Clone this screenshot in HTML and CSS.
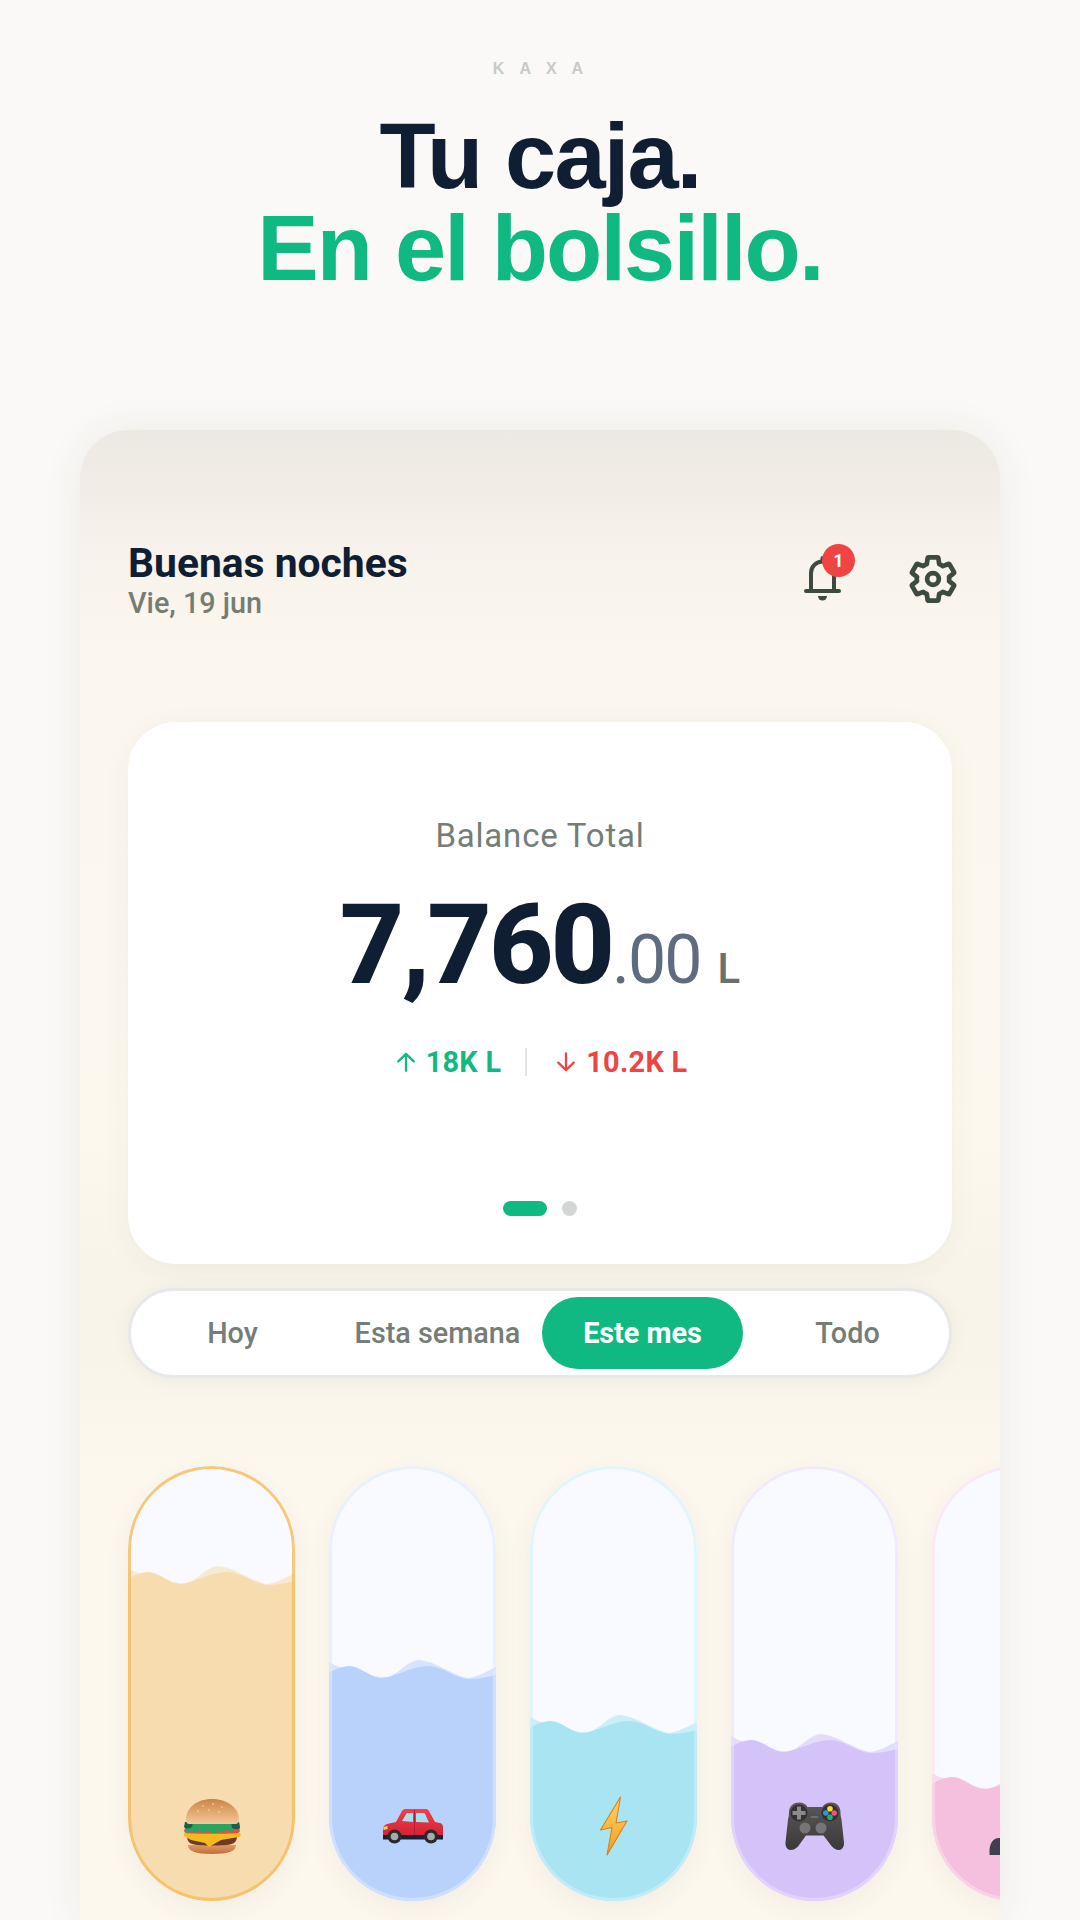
FILE: index.html
```html
<!DOCTYPE html>
<html lang="es">
<head>
<meta charset="utf-8">
<title>Kaxa</title>
<link rel="stylesheet" href="styles.css">
</head>
<body>
<svg class="defs" width="0" height="0" aria-hidden="true">
  <defs>
    <linearGradient id="bun" x1="0" y1="0" x2="0" y2="1"><stop offset="0" stop-color="#cb8549"/><stop offset="1" stop-color="#f6c898"/></linearGradient>
    <linearGradient id="bunlow" x1="0" y1="0" x2="0" y2="1"><stop offset="0" stop-color="#e09a62"/><stop offset="1" stop-color="#bf6f3a"/></linearGradient>
    <linearGradient id="boltfill" x1="0" y1="0" x2="0" y2="1"><stop offset="0" stop-color="#ffd76a"/><stop offset="1" stop-color="#f59b1e"/></linearGradient>
    <linearGradient id="padbody" x1="0" y1="0" x2="0" y2="1"><stop offset="0" stop-color="#5b585a"/><stop offset="1" stop-color="#3a3839"/></linearGradient>
    <linearGradient id="carbody" x1="0" y1="0" x2="0" y2="1"><stop offset="0" stop-color="#f0404e"/><stop offset="1" stop-color="#d4202f"/></linearGradient>
    <symbol id="wave" viewBox="0 0 163 22" preserveAspectRatio="none">
      <path class="wave-back" d="M0 2C4 4 7 6 10 7 26 10 42 17 55 18 66 16 76 1 87 0 102 0 120 15 135 18 145 17 155 11 163 7V22H0Z"/>
      <path class="wave-front" d="M0 13C6 9 14 6 20 6 30 6 40 17 50 18 66 17 80 6 97 6 110 6 125 19 137 19 146 19 155 17 163 15V22H0Z"/>
    </symbol>
  </defs>
</svg>
<header class="hero">
  <div class="brand">KAXA</div>
  <h1 class="headline"><span class="line-dark">Tu caja.</span><span class="line-green">En el bolsillo.</span></h1>
</header>
<main class="phone">
  <section class="topbar">
    <div class="greeting">
      <div class="hello">Buenas noches</div>
      <div class="date">Vie, 19 jun</div>
    </div>
    <div class="actions">
      <div class="bell">
        <svg class="bell-icon" viewBox="0 0 50 50" fill="none" stroke="#3d4a3f" stroke-width="4" stroke-linejoin="round" stroke-linecap="round"><path d="M8 37h33M13 37V19a11.500 11.500 0 0 1 23 0v18"/><path d="M24.500 7.500V4"/><path d="M20 42h9a4.500 4.500 0 0 1-9 0z" fill="#3d4a3f" stroke="none"/></svg>
        <span class="badge">1</span>
      </div>
      <svg class="gear-icon" viewBox="0 0 24 24" fill="none" stroke="#3d4a3f" stroke-width="2.100" stroke-linejoin="round"><path d="M19.140 12.940c.04-.3.06-.61.06-.94 0-.32-.02-.64-.07-.94l2.030-1.580c.18-.14.23-.41.12-.61l-1.920-3.320c-.12-.22-.37-.29-.59-.22l-2.390.96c-.5-.38-1.030-.7-1.620-.94l-.36-2.540c-.04-.24-.24-.41-.48-.41h-3.840c-.24 0-.43.17-.47.41l-.36 2.540c-.59.24-1.130.57-1.620.94l-2.390-.96c-.22-.08-.47 0-.59.22L2.740 8.870c-.12.21-.08.47.12.61l2.030 1.580c-.05.3-.09.63-.09.94s.02.64.07.94l-2.030 1.580c-.18.14-.23.41-.12.61l1.920 3.320c.12.22.37.29.59.22l2.390-.96c.5.38 1.030.7 1.620.94l.36 2.540c.05.24.24.41.48.41h3.840c.24 0 .44-.17.47-.41l.36-2.540c.59-.24 1.130-.56 1.620-.94l2.390.96c.22.08.47 0 .59-.22l1.920-3.320c.12-.22.07-.47-.12-.61l-2.010-1.580z"/><circle cx="12" cy="12" r="2.600"/></svg>
    </div>
  </section>

  <section class="balance">
    <div class="balance-label">Balance Total</div>
    <div class="amount"><span class="amount-int">7,760</span><span class="amount-dec">.00</span><span class="amount-cur">L</span></div>
    <div class="flows">
      <span class="flow flow-in"><svg class="arrow" viewBox="0 0 24 24" fill="none" stroke="currentColor" stroke-width="1.800" stroke-linecap="round" stroke-linejoin="round"><path d="M12 19V5.500M5.800 11.500 12 5.500l6.200 6"/></svg>18K L</span>
      <span class="flow-sep"></span>
      <span class="flow flow-out"><svg class="arrow" viewBox="0 0 24 24" fill="none" stroke="currentColor" stroke-width="1.800" stroke-linecap="round" stroke-linejoin="round"><path d="M12 5v13.500M5.800 12.500 12 18.500l6.200-6"/></svg>10.2K L</span>
    </div>
    <div class="dots"><span class="dot dot-active"></span><span class="dot"></span></div>
  </section>

  <nav class="tabs">
    <span class="tab">Hoy</span>
    <span class="tab">Esta semana</span>
    <span class="tab tab-active">Este mes</span>
    <span class="tab">Todo</span>
  </nav>

  <section class="jars">
    <div class="jar jar-food">
      <div class="level" style="height:314px">
        <svg class="wave"><use href="#wave"/></svg>
        <svg class="emoji" viewBox="0 0 60 60">
          <path d="M6 49c0 6 7 9 24 9s24-3 24-9z" fill="url(#bunlow)"/>
          <path d="M5 41c0 3 2 6 5 7 6 2 34 2 40 0 3-1 5-4 5-7z" fill="#6f3b26"/>
          <path d="M4 29h52l2 6c-2 4-6 4-9 5H11c-3-1-7-1-9-5z" fill="#e4503f"/>
          <path d="M2 37c9 1 48 1 56 0l1 2-2 2-18 3-12 7-4-4-14-3-7-4z" fill="#f5b922"/>
          <path d="M3 26h54l1 6c-2 2-3 2-5 1-3 3-6 2-9 1-3 2-6 3-9 2-3 2-6 1-8-1-3 2-6 2-9 0-3 2-6 2-8 0-3 2-5 2-7 0z" fill="#2aa561"/>
          <path d="M3 26h8l-1 5c-3 2-6 2-8 0zM49 26h8l1 6c-2 2-5 1-8 0z" fill="#17604f"/>
          <path d="M4 24C4 10 17 3 30 3s27 7 27 21c0 2-1 4-4 4H7c-2 0-3-2-3-4z" fill="url(#bun)"/>
          <g fill="#f7dcae"><circle cx="21" cy="10" r=".8"/><circle cx="31" cy="8" r=".8"/><circle cx="40" cy="11" r=".8"/><circle cx="16" cy="15" r=".8"/><circle cx="27" cy="14" r=".8"/><circle cx="37" cy="16" r=".8"/></g>
        </svg>
      </div>
    </div>
    <div class="jar jar-car">
      <div class="level" style="height:220px">
        <svg class="wave"><use href="#wave"/></svg>
        <svg class="emoji" viewBox="0 0 60 60">
          <path d="M0 34c0-3 1-5 4-6l9-2 6-11c.6-1 1.600-2 3-2h21c1.500 0 2.500 1 3 2l6 11 5 1c2 .5 3 2 3 4v10H0z" fill="url(#carbody)"/>
          <path d="M19 25 23.500 17.500c.3-.4.8-.5 1.200-.5H30v9zM33 17h7.500c.8 0 1.300.3 1.500.8L46 26.500 33 26z" fill="#a4e0f3"/>
          <path d="M31.500 14v26" stroke="#ac1b2b" stroke-width=".8"/>
          <path d="M0 39h60v4.500H0z" fill="#1c1f38"/>
          <circle cx="11.500" cy="40.500" r="7" fill="#2a2a2c"/><circle cx="11.500" cy="40.500" r="3.800" fill="#a9a9ab"/>
          <circle cx="48" cy="40.500" r="7" fill="#2a2a2c"/><circle cx="48" cy="40.500" r="3.800" fill="#a9a9ab"/>
          <path d="M.5 31l4-1v3l-4 1z" fill="#f8d351"/>
        </svg>
      </div>
    </div>
    <div class="jar jar-bolt">
      <div class="level" style="height:165px">
        <svg class="wave"><use href="#wave"/></svg>
        <svg class="emoji" viewBox="0 0 60 60"><path d="M36.500 1 16.500 34 28 31.500 23 59 43 25 32 27z" fill="url(#boltfill)" stroke="#d8821a" stroke-width="1.100" stroke-linejoin="round"/></svg>
      </div>
    </div>
    <div class="jar jar-game">
      <div class="level" style="height:146px">
        <svg class="wave"><use href="#wave"/></svg>
        <svg class="emoji" viewBox="0 0 60 60">
          <path d="M14 6.500c4 0 7 1.500 8.500 4.500h15c1.500-3 4.500-4.500 8.500-4.500 6.500 0 9.500 4.500 9.500 10 0 3 .5 5 1 7l2.500 23c.4 4-2 7.500-5 7.500-3 0-5-1.500-7.500-4l-8-10.500H21L13 50.500C10.500 53 8.500 54 5.500 54c-3 0-5.400-3.500-5-7.500L3 23.500c.5-2 1-4 1-7C4 11 7.500 6.500 14 6.500z" fill="url(#padbody)"/>
          <circle cx="14" cy="17" r="8.500" fill="#333133"/>
          <path d="M12 10.500h4v4.500h4.500v4H16v4.500h-4V19H7.500v-4H12z" fill="#8d8a8c"/>
          <circle cx="45" cy="17" r="8.500" fill="#333133"/>
          <circle cx="45" cy="12.800" r="2.800" fill="#fddc2c"/><circle cx="40.800" cy="17" r="2.800" fill="#259be0"/><circle cx="49.200" cy="17" r="2.800" fill="#f0527f"/><circle cx="45" cy="21.200" r="2.800" fill="#19b56e"/>
          <circle cx="20" cy="32" r="5.500" fill="#777476"/><circle cx="36" cy="32" r="5.500" fill="#777476"/>
          <rect x="25.500" y="20" width="8" height="2" rx="1" fill="#706d6f"/>
        </svg>
      </div>
    </div>
    <div class="jar jar-hat">
      <div class="level" style="height:109px">
        <svg class="wave"><use href="#wave"/></svg>
        <svg class="emoji" viewBox="0 0 60 60"><path d="M3.500 59V54C4 46 8 42 13 42c8 0 14 7 14 17z" fill="#3f3f52"/></svg>
      </div>
    </div>
  </section>
</main>
</body>
</html>
```
FILE: styles.css
```css
* { box-sizing: border-box; }
html, body { margin: 0; height: 1920px; overflow: hidden; }
body { background: #faf9f7; font-family: "Roboto", "Liberation Sans", sans-serif; }
.defs { position: absolute; }

.hero { height: 430px; padding-top: 61px; display: flex; flex-direction: column; align-items: center; }
.brand { font: 700 16px/16px "Liberation Sans", sans-serif; letter-spacing: 15px; margin-right: -11px; color: #c9c9c7; }
.headline { margin: 33px 0 0; font: 700 92px/92px "Liberation Sans", sans-serif; letter-spacing: -1.84px; text-align: center; }
.line-dark, .line-green { display: block; }
.line-dark { color: #0f1e32; }
.line-green { color: #10b981; }

.phone {
  width: 920px; height: 1490px; margin-left: 80px; padding: 106px 48px 0;
  border-radius: 48px 48px 0 0; overflow: hidden;
  background: linear-gradient(#ece9e2 0, #f6f1ea 110px, #fcf7ee 220px, #fdf8ee 700px, #f8f3e9 880px, #fdf8ee 1040px);
  box-shadow: 0 0 40px rgba(60, 50, 30, .07);
}

.topbar { display: flex; justify-content: space-between; align-items: center; height: 86px; }
.hello { margin-top: 2px; font-size: 40.8px; line-height: 44px; font-weight: 700; color: #0f1e32; }
.date { margin-top: 1px; font-size: 28.8px; line-height: 34px; font-weight: 500; color: #757d72; }
.actions { display: flex; gap: 58px; margin-right: -8px; align-items: center; }
.bell { position: relative; width: 50px; height: 50px; }
.bell-icon { width: 50px; height: 50px; display: block; }
.gear-icon { width: 54px; height: 54px; display: block; }
.badge { position: absolute; top: -10px; left: 24px; width: 33px; height: 33px; border-radius: 50%; background: #ef4444; color: #fff; font-size: 18px; font-weight: 700; line-height: 33px; text-align: center; }

.balance {
  height: 542px; margin-top: 100px; padding-top: 94px; background: #fff; border-radius: 48px;
  box-shadow: 0 6px 30px rgba(60, 50, 30, .05);
  display: flex; flex-direction: column; align-items: center;
}
.balance-label { font-size: 33px; line-height: 40px; letter-spacing: .8px; color: #757d78; }
.amount { display: flex; align-items: baseline; margin-top: 33px; height: 112px; }
.amount-int { font-size: 112px; line-height: 112px; font-weight: 800; letter-spacing: -3px; color: #0f1e32; }
.amount-dec { font-size: 68px; line-height: 68px; letter-spacing: -2px; color: #5f6b7f; }
.amount-cur { font-size: 42px; line-height: 42px; font-weight: 500; color: #6a716c; margin-left: 17px; }
.flows { display: flex; align-items: center; gap: 24px; margin: 45px 2px 0 0; height: 32px; font-size: 28.8px; line-height: 32px; font-weight: 700; letter-spacing: .3px; }
.flow { display: flex; align-items: center; gap: 5px; }
.flow-in { color: #10b981; }
.flow-out { color: #ef4444; }
.flow-sep { width: 2px; height: 28px; background: #e2e5e3; }
.arrow { width: 30px; height: 30px; flex: none; }
.dots { display: flex; gap: 15px; margin-top: 123px; align-items: center; }
.dot { width: 15px; height: 15px; border-radius: 50%; background: #d4d6d5; }
.dot-active { width: 44px; border-radius: 8px; background: #10b981; }

.tabs {
  width: 824px; height: 90px; margin-top: 24px; padding: 6px 1px; border: 3px solid #e7e9e9; border-radius: 45px; background: #fff;
  box-shadow: 0 4px 20px rgba(60, 50, 30, .05);
  display: grid; grid-template-columns: repeat(4, 1fr); gap: 4px;
}
.tab { display: flex; align-items: center; justify-content: center; font-size: 28.8px; font-weight: 500; color: #757d78; }
.tab-active { background: #10b981; color: #fff; font-weight: 700; border-radius: 36px; }

.jars { display: flex; gap: 34px; margin-top: 88px; width: 1000px; }
.jar { position: relative; flex: none; width: 167px; height: 435px; border-radius: 84px; background: #f9faff; overflow: hidden; box-shadow: 0 8px 26px rgba(60, 50, 30, .06); }
.jar::after { content: ""; position: absolute; inset: 0; border: 3px solid; border-radius: inherit; }
.level { position: absolute; left: 0; right: 0; bottom: 0; }
.wave { position: absolute; left: 0; bottom: 100%; width: 100%; height: 22px; margin-bottom: -1px; display: block; }
.wave-back { fill-opacity: .55; }
.emoji { position: absolute; left: 50%; bottom: 45px; width: 60px; height: 60px; margin-left: -30px; }

.jar-food::after { border-color: rgba(245, 190, 100, .85); }
.jar-food .level { background: #f6dcae; }
.jar-food .wave { fill: #f6dcae; }
.jar-car::after { border-color: rgba(222, 233, 255, .6); }
.jar-car .level { background: #b9d2fb; }
.jar-car .wave { fill: #b9d2fb; }
.jar-bolt::after { border-color: rgba(208, 241, 251, .6); }
.jar-bolt .level { background: #a8e4f2; }
.jar-bolt .wave { fill: #a8e4f2; }
.jar-game::after { border-color: rgba(233, 224, 253, .6); }
.jar-game .level { background: #d4c3f9; }
.jar-game .wave { fill: #d4c3f9; }
.jar-hat::after { border-color: rgba(251, 222, 238, .6); }
.jar-hat .level { background: #f4c0de; }
.jar-hat .wave { fill: #f4c0de; }
```
